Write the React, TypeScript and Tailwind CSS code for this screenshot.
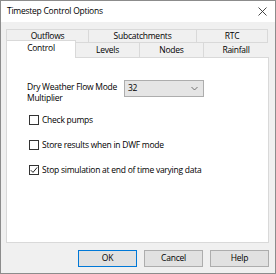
import React from 'react';

const font = { fontFamily: '"Open Sans", "Noto Sans", Arial, sans-serif' };

const Check = ({ checked, label }: { checked?: boolean; label: string }) => (
  <div className="flex items-center gap-[3px] h-[12px]">
    <div className="w-[10px] h-[10px] border border-[#333333] bg-white flex items-center justify-center">
      {checked && (
        <svg width="8" height="8" viewBox="0 0 8 8">
          <path d="M0.8 4.2 L3 6.4 L7.2 1.4" stroke="#222" strokeWidth="1" fill="none" />
        </svg>
      )}
    </div>
    <span>{label}</span>
  </div>
);

const Tab = ({ label, w }: { label: string; w: string }) => (
  <div className={`${w} h-full flex items-center justify-center border-t border-l border-r border-[#d9d9d9] -ml-px first:ml-0`}>
    {label}
  </div>
);

export default function App() {
  return (
    <div
      className="w-[276px] h-[274px] border border-[#8c8c8c] bg-[#f0f0f0] flex flex-col text-[8.5px] tracking-[-0.25px] text-black whitespace-nowrap"
      style={font}
    >
      {/* title bar */}
      <div className="h-[21px] bg-white flex items-center justify-between pl-[6px] pr-[8px]">
        <span>Timestep Control Options</span>
        <svg width="9" height="9" viewBox="0 0 9 9">
          <path d="M0.5 0.5 L8.5 8.5 M8.5 0.5 L0.5 8.5" stroke="#333" strokeWidth="0.9" />
        </svg>
      </div>

      <div className="flex flex-col pl-[5px] pr-[6px] pt-[7px]">
        {/* tabs */}
        <div className="flex h-[13px] w-[262px]">
          <Tab label="Outflows" w="w-[83px]" />
          <Tab label="Subcatchments" w="w-[109px]" />
          <Tab label="RTC" w="w-[72px]" />
        </div>
        <div className="flex h-[15px] w-[262px] border-t border-[#d9d9d9] relative">
          <div className="w-[70px] h-[18px] -mt-[3px] flex items-center justify-center bg-white border-t border-l border-r border-[#d9d9d9] relative z-10 pb-[2px]">
            Control
          </div>
          <div className="w-[64px] h-full flex items-center justify-center border-r border-[#d9d9d9]">Levels</div>
          <div className="w-[64px] h-full flex items-center justify-center border-r border-[#d9d9d9]">Nodes</div>
          <div className="w-[64px] h-full flex items-center justify-center">Rainfall</div>
        </div>

        {/* panel */}
        <div className="w-[263px] h-[186px] bg-white border border-[#d9d9d9] pl-[20px] pt-[22px] flex flex-col">
          <div className="flex items-start">
            <div className="w-[97px] leading-[11px] pt-[1px]">
              Dry Weather Flow Mode<br />Multiplier
            </div>
            <div className="w-[80px] h-[17px] bg-[#e5e5e5] border border-[#adadad] flex items-center justify-between pl-[3px] pr-[5px]">
              <span>32</span>
              <svg width="7" height="5" viewBox="0 0 7 5">
                <path d="M0.5 1 L3.5 4 L6.5 1" stroke="#555" strokeWidth="0.8" fill="none" />
              </svg>
            </div>
          </div>
          <div className="flex flex-col gap-[13px] pl-[2px] pt-[11px]">
            <Check label="Check pumps" />
            <Check label="Store results when in DWF mode" />
            <Check checked label="Stop simulation at end of time varying data" />
          </div>
        </div>

        {/* buttons */}
        <div className="flex justify-end gap-[7px] pt-[7px]">
          <button className="w-[59px] h-[17px] bg-[#e1e1e1] border border-[#0078d7] flex items-center justify-center">OK</button>
          <button className="w-[59px] h-[17px] bg-[#e1e1e1] border border-[#adadad] flex items-center justify-center">Cancel</button>
          <button className="w-[59px] h-[17px] bg-[#e1e1e1] border border-[#adadad] flex items-center justify-center">Help</button>
        </div>
      </div>
    </div>
  );
}
